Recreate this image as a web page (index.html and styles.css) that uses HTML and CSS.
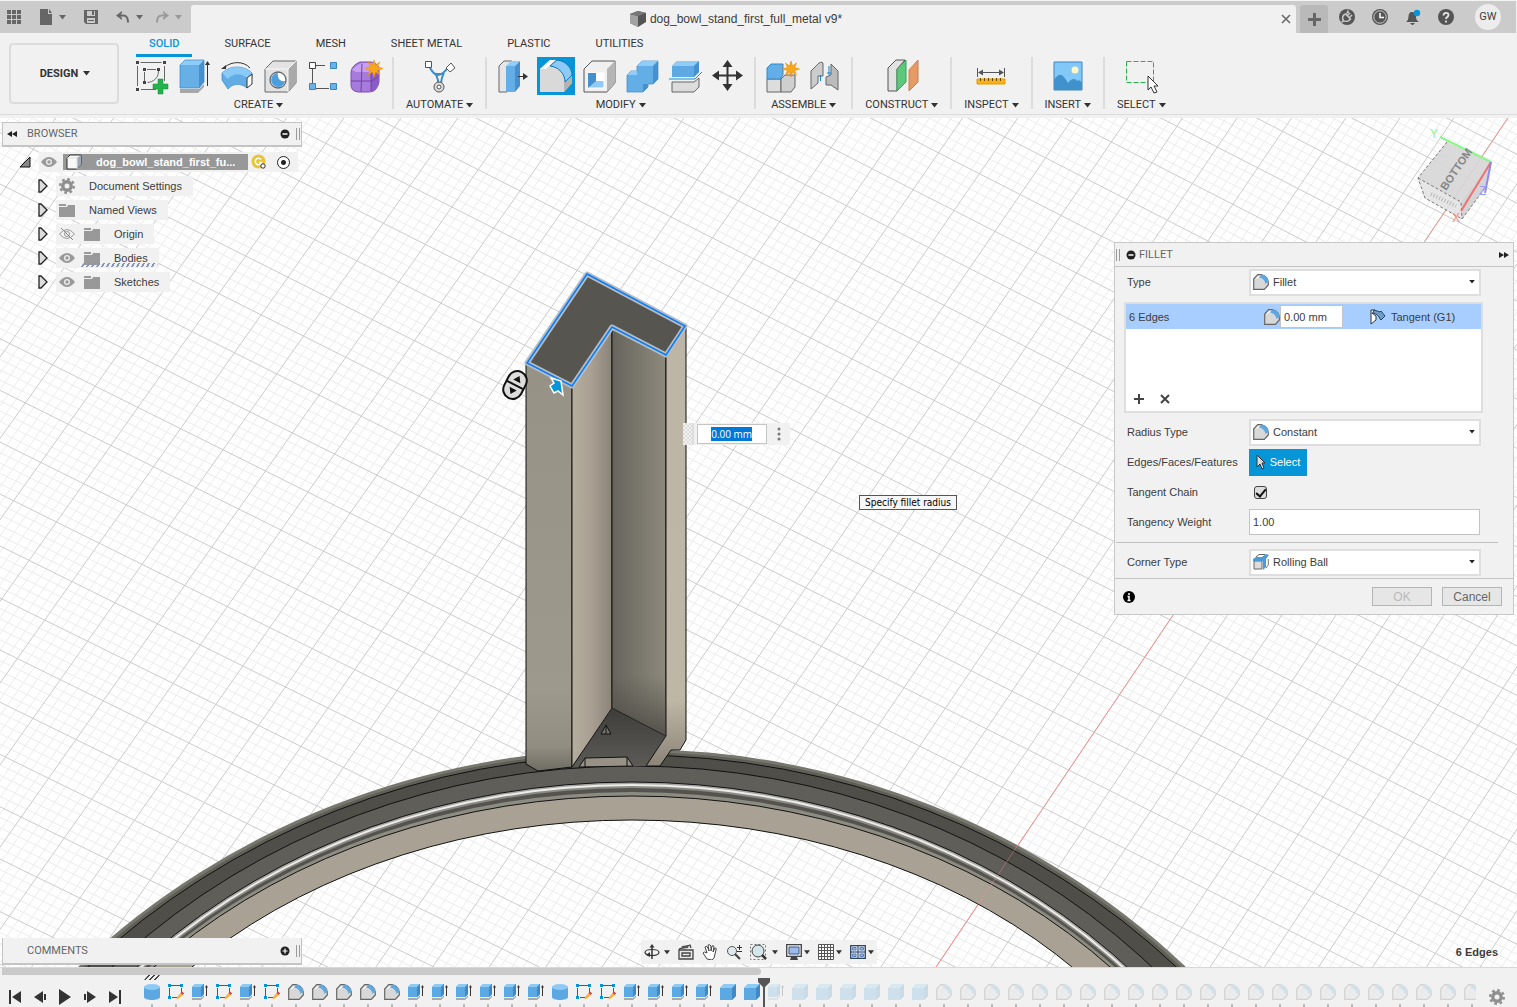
FILE: index.html
```html
<!DOCTYPE html>
<html lang="en">
<head>
<meta charset="utf-8">
<title>dog_bowl_stand_first_full_metal v9*</title>
<link rel="stylesheet" href="styles.css">
</head>
<body>
<svg class="sprite" aria-hidden="true">
  <symbol id="caret" viewBox="0 0 7 5"><path d="M0 0h7L3.500 4.500z" fill="currentColor"/></symbol>
  <symbol id="i-apps" viewBox="0 0 14 14"><path d="M0 0h4v4H0zM5 0h4v4H5zM10 0h4v4h-4zM0 5h4v4H0zM5 5h4v4H5zM10 5h4v4h-4zM0 10h4v4H0zM5 10h4v4H5zM10 10h4v4h-4z" fill="#666"/></symbol>
  <symbol id="i-file" viewBox="0 0 14 16"><path d="M1 0h8v5h4v11H1zM10 0l3 4h-3z" fill="#666"/></symbol>
  <symbol id="i-save" viewBox="0 0 14 14"><path d="M0 0h14v14H2l-2-2zM3 1v5h8V1zM3 8v5h8V8z" fill="#666" fill-rule="evenodd"/><path d="M8 1h2v4H8zM4 10h6v1H4z" fill="#666"/></symbol>
  <symbol id="i-undo" viewBox="0 0 14 12"><path d="M0 4.500L6 0v2L3.500 4.500 6 7v2zM3 3.500h4c4 0 6 3 6 8h-2c0-4-1-6-4-6H3z" fill="currentColor"/></symbol>
  <symbol id="i-cube" viewBox="0 0 16 16"><path d="M0 3l8-3 8 2v9l-8 5-8-4z" fill="#555"/><path d="M0 3l8 2v11l-8-4z" fill="#a3a3a3"/><path d="M0 3l8-3 8 2-8 3z" fill="#777"/></symbol>
  <symbol id="i-ext" viewBox="0 0 16 16"><circle cx="8" cy="8" r="8" fill="#555"/><path d="M4.500 11.500C2.500 9 4 5.500 6.500 5l5 5C9.500 12.500 6.500 13 4.500 11.500zM8.500 6.500L11 4M10.500 8.500L13 6M4.500 11.500L2.500 13.500" stroke="#ccc" stroke-width="1.500" fill="none"/><path d="M9 0l1 4-3 1z" fill="#cbcbcb"/></symbol>
  <symbol id="i-clock" viewBox="0 0 16 16"><circle cx="8" cy="8" r="8" fill="#555"/><circle cx="8" cy="8" r="6.200" fill="none" stroke="#ccc"/><path d="M8 4v4.500h4" stroke="#fff" stroke-width="1.500" fill="none"/></symbol>
  <symbol id="i-bell" viewBox="0 0 16 16"><path d="M1 13c3-2 2-5 3-8 1-2 2-2 3-2s3 0 4 3c0 3 0 5 3 7zM5 14h5l-2 2H7z" fill="#555"/><circle cx="12" cy="4" r="3.200" fill="#0696d7"/></symbol>
  <symbol id="i-help" viewBox="0 0 16 16"><circle cx="8" cy="8" r="8" fill="#555"/><path d="M5.500 6.500C5.500 3 10.500 3 10.500 6c0 2-2.500 2-2.500 4M8 11.500v2" stroke="#e5e5e5" stroke-width="1.800" fill="none"/></symbol>

  <symbol id="i-sketch" viewBox="0 0 38 38"><g fill="none" stroke="#666"><path d="M8.500 5.500h21M5.500 9v20M32.500 9v15M9 32.500h15M12.500 15v10M15 12.500h9M26.500 14c0 7-5 11-11 11.500"/></g><path d="M4 4h3v3H4zM31 4h3v3h-3zM4 31h3v3H4zM11 11h3v3h-3zM25 11h3v3h-3zM11 24h3v3h-3z" fill="#444"/><path d="M26 22h5v5h5v5h-5v5h-5v-5h-5v-5h5z" fill="#23b24b" stroke="#178a38" stroke-width=".5"/></symbol>
  <symbol id="i-extrude" viewBox="0 0 38 38"><path d="M5 32h19l5-5v3l-6 6H5z" fill="#a7a7a7"/><path d="M5 8h19v23H5z" fill="#66b0e6"/><path d="M5 8l5-5h19l-5 5z" fill="#8fcdf8"/><path d="M24 8l5-5v22l-5 6z" fill="#4591cf"/><path d="M5 31V8l5-5h19v22l-5 6z" fill="none" stroke="#3a86c2" stroke-width=".7"/><path d="M32.500 29V6" stroke="#333"/><path d="M30 8l2.500-4L35 8z" fill="#333"/></symbol>
  <symbol id="i-revolve" viewBox="0 0 38 38"><path d="M4 16C12 8 26 8 34 16v4l-5 11c-6-5-14-5-19 1l-6-9z" fill="#62ade5" stroke="#3785c4" stroke-width=".7"/><path d="M4 16C12 8 26 8 34 16l-5 5c-6-5-14-5-19 1z" fill="#8bcaf7"/><path d="M29 21l5-4v10l-5 4z" fill="#fff" stroke="#333"/><path d="M7 10C14 4 26 4 32 11" fill="none" stroke="#333"/><path d="M3 12l5-4v4z" fill="#333"/></symbol>
  <symbol id="i-hole" viewBox="0 0 38 38"><path d="M4 12l8-8h23v22l-8 9H4z" fill="#e2e2e2" stroke="#666"/><path d="M27 12l8-8v22l-8 9z" fill="#aaa"/><path d="M4 12h23v23M27 12l8-8" fill="none" stroke="#f8f8f8"/><circle cx="17" cy="23" r="8" fill="#fff" stroke="#666" stroke-width="1.300"/><path d="M17 16a7 7 0 1 0 7 8c-5 1-8-3-7-8z" fill="#4d9fdb"/></symbol>
  <symbol id="i-pattern" viewBox="0 0 38 38"><path d="M8.500 12v14M12 31.500h13" stroke="#555"/><path d="M5.500 5.500h6v6h-6z" fill="#fff" stroke="#444"/><path d="M12 8.500h13" stroke="#555" stroke-dasharray="9 4"/><path d="M26.500 5.500h6v6h-6zM5.500 26.500h6v6h-6zM26.500 26.500h6v6h-6z" fill="#69b3ea" stroke="#3a86c2"/></symbol>
  <symbol id="i-form" viewBox="0 0 38 38"><path d="M4 15Q5 8 13 5h11q7 1 8 8v12q-2 10-10 10H11q-7-1-7-7z" fill="#a77bdc" stroke="#7b4fb5"/><path d="M24 14l8-5v16q-2 9-8 10z" fill="#8b5bc7"/><path d="M5 13q6-7 12-7h9q4 2 0 6l-4 3H9z" fill="#c7a0f2"/><path d="M15 7l-1 28M4 24h21l7-5M24 13v21" fill="none" stroke="#7242a6"/><path d="M27 3l1.700 5 4.300-3-2.500 4.500 5.500 2-5.500 2 2.500 4.500-4.300-3-1.700 5-1.700-5-4.300 3 2.500-4.500-5.500-2 5.500-2-2.500-4.500 4.300 3z" fill="#faa61a" stroke="#ea8c00" stroke-width=".5"/></symbol>
  <symbol id="i-auto" viewBox="0 0 38 38"><path d="M8 9c3 6 6 9 9 9s7-3 11-9M14 16c3 5 4 8 3 13M23 16c-3 5-3 8-3 13M14 17h9" stroke="#3f8cc9" stroke-width="2" fill="none"/><path d="M4.500 4.500h6v6h-6z" fill="#fff" stroke="#555"/><path d="M30 6l4 5-5 4-4-4z" fill="#fff" stroke="#555"/><circle cx="18" cy="30" r="5" fill="#ddd" stroke="#555"/><circle cx="18" cy="30" r="2" fill="#fff" stroke="#555"/></symbol>
  <symbol id="i-press" viewBox="0 0 38 38"><path d="M5 9l5-5h8v24l-5 7H5z" fill="#e6e6e6" stroke="#666"/><path d="M12 9h9v26h-9z" fill="#63aee6"/><path d="M12 9l5-5h9l-5 5z" fill="#8fcdf8"/><path d="M21 9l5-5v25l-5 6z" fill="#4591cf"/><path d="M24 19.500h6" stroke="#333"/><path d="M29 16l5 3.500-5 3.500z" fill="#333"/></symbol>
  <symbol id="i-fillet" viewBox="0 0 38 38"><path d="M3 12l10-9h5c10 1 17 9 17 18v5l-8 9H3z" fill="#d9d9d9"/><path d="M3 12l10-9h5L9 12z" fill="#fff"/><path d="M27 25l8-7v8l-8 9z" fill="#b3b3b3"/><path d="M13 9l7-6c9 1 15 8 15 15l-7 7c0-8-6-15-15-16z" fill="#8ccbf8" stroke="#1176ba"/></symbol>
  <symbol id="i-shell" viewBox="0 0 38 38"><path d="M4 12l8-8h23v22l-8 9H4z" fill="#f0f0f0" stroke="#555"/><path d="M27 12l8-8v22l-8 9z" fill="#b5b5b5"/><path d="M8 16h16v15H8z" fill="#8fcbf6" stroke="#fff"/><path d="M8 16h8v8l-8 7z" fill="#4390cc"/><path d="M16 16h8v8h-8z" fill="#fff"/></symbol>
  <symbol id="i-combine" viewBox="0 0 38 38"><path d="M4 18l4-4h6V9l5-5h16v18l-5 5h-5v3l-5 5H4z" fill="#63aee6" stroke="#3a86c2" stroke-width=".7"/><path d="M14 9l5-5h16l-5 5z" fill="#8fcdf8"/><path d="M30 9l5-5v18l-5 5zM20 27h5v3l-5 5z" fill="#4591cf"/><path d="M4 18l4-4h6v4z" fill="#8fcdf8"/></symbol>
  <symbol id="i-split" viewBox="0 0 38 38"><path d="M6 9l5-5h22v11l-5 5H6z" fill="#5ea9e2"/><path d="M6 9l5-5h22l-5 5z" fill="#8fcdf8"/><path d="M28 9l5-5v11l-5 5z" fill="#4591cf"/><path d="M6 25h22l5-4v9l-5 5H6z" fill="#dcdcdc" stroke="#666"/><path d="M3 22h26l7-7" stroke="#0696d7" fill="none"/></symbol>
  <symbol id="i-move" viewBox="0 0 38 38"><path d="M18.500 7v23M7 18.500h23" stroke="#333" stroke-width="2"/><path d="M18.500 3l5 7h-10zM18.500 34l5-7h-10zM3 18.500l7-5v10zM34 18.500l-7-5v10z" fill="#333"/></symbol>
  <symbol id="i-newcomp" viewBox="0 0 38 38"><path d="M4 22h14v13H4z" fill="#ddd" stroke="#666"/><path d="M18 22l4-4h10v12l-4 5H18z" fill="#cfcfcf" stroke="#666"/><path d="M4 11l4-4h12v11l-3 4H4z" fill="#63aee6" stroke="#3a86c2"/><path d="M28 4l1.500 5 4-3-2 4.500 5 1.500-5 1.500 2 4.500-4-3-1.500 5-1.500-5-4 3 2-4.500-5-1.500 5-1.500-2-4.500 4 3z" fill="#faa61a" stroke="#ea8c00" stroke-width=".6"/></symbol>
  <symbol id="i-joint" viewBox="0 0 38 38"><path d="M5 14l8-8q4-2 4 1v12h-5v7l-7 6z" fill="#ccc" stroke="#666"/><path d="M32 14l-7-7v11l-5 2v8h5l7 5z" fill="#bbb" stroke="#666"/><path d="M14.500 18v6M23 9v9M21 16h4" stroke="#0a84d8"/></symbol>
  <symbol id="i-plane" viewBox="0 0 38 38"><path d="M5 11l8-8h9l-8 9v22H5z" fill="#e2e2e2" stroke="#555"/><path d="M14 12l9-9v22l-9 9z" fill="#5dc77c" stroke="#38a159"/><path d="M26 13l9-10v22l-9 9z" fill="#e69a66" stroke="#d17f45"/></symbol>
  <symbol id="i-measure" viewBox="0 0 38 38"><path d="M5.500 11v9M32.500 11v9M7 15.500h24" stroke="#555"/><path d="M6 15.500l5-3v6zM32 15.500l-5-3v6z" fill="#555"/><path d="M5 22h28v5H5z" fill="#fbb116" stroke="#e59a00"/><path d="M8.500 21v3M12.500 21v3M16.500 21v3M20.500 21v3M24.500 21v3M28.500 21v3" stroke="#6b4a00"/></symbol>
  <symbol id="i-image" viewBox="0 0 38 38"><path d="M5 5h28v28H5z" fill="#82c8f8" stroke="#3a86c2"/><path d="M5 23c6-9 9-5 14 3 3-5 8-5 9-2 2-2 4 0 5 2v7H5z" fill="#4092cd"/><circle cx="26" cy="13" r="3.500" fill="#fdf8c4"/></symbol>
  <symbol id="i-select" viewBox="0 0 38 38"><path d="M4.500 4.500h27v21h-27z" fill="none" stroke="#23b24b" stroke-dasharray="5 2"/><path d="M26 19v14l3-3 3 6 3-1-3-6h4z" fill="#fff" stroke="#333"/></symbol>

  <symbol id="i-less" viewBox="0 0 12 12"><circle cx="6" cy="6" r="4.500" fill="#222"/><path d="M3.500 6h5" stroke="#fff" stroke-width="1.500"/></symbol>
  <symbol id="i-more" viewBox="0 0 12 12"><circle cx="6" cy="6" r="4.500" fill="#222"/><path d="M3.500 6h5M6 3.500v5" stroke="#fff" stroke-width="1.200"/></symbol>
  <symbol id="i-back" viewBox="0 0 10 6"><path d="M5 0v6L0 3zM10 0v6L5 3z" fill="#222"/></symbol>
  <symbol id="i-fwd" viewBox="0 0 10 6"><path d="M5 0v6l5-3zM0 0v6l5-3z" fill="#222"/></symbol>
  <symbol id="i-open" viewBox="0 0 12 12"><path d="M11 1v10H1z" fill="#888" stroke="#111"/></symbol>
  <symbol id="i-closed" viewBox="0 0 10 14"><path d="M1 1h2l6 6-6 6H1z" fill="#ddd" stroke="#222" stroke-width="1.300"/></symbol>
  <symbol id="i-eye" viewBox="0 0 16 12"><path d="M0 6q8-10 16 0-8 10-16 0z" fill="#999"/><circle cx="8" cy="6" r="3" fill="#eee"/><circle cx="8" cy="6" r="1.700" fill="#999"/></symbol>
  <symbol id="i-noeye" viewBox="0 0 16 12"><path d="M.5 6q7.500-9 15 0-7.500 9-15 0z" fill="none" stroke="#999"/><circle cx="8" cy="6" r="2.500" fill="none" stroke="#999"/><path d="M2 0l12 12" stroke="#888"/></symbol>
  <symbol id="i-folder" viewBox="0 0 16 13"><path d="M0 0h7v2H0zM0 3h8l1-2h7v12H0z" fill="#999"/></symbol>
  <symbol id="i-gear" viewBox="0 0 16 16"><circle cx="8" cy="8" r="4.200" fill="none" stroke="#8f8f8f" stroke-width="3.400"/><circle cx="8" cy="8" r="6.800" fill="none" stroke="#8f8f8f" stroke-width="2.400" stroke-dasharray="2.670 2.670"/></symbol>
  <symbol id="i-body" viewBox="0 0 16 16"><path d="M1 4l3-3h11v10l-4 4H1z" fill="#f8f8f8" stroke="#333"/><path d="M11 4l4-3v10l-4 4z" fill="#9ba7b5"/><path d="M1 4h10v11" fill="none" stroke="#ddd"/></symbol>

  <symbol id="t-fillet" viewBox="0 0 16 16"><path d="M.7 5l4-4.300h4C13 2 15.300 5 15.300 9v2l-4 4.300H.7z" fill="#d8d8d8" stroke="#666" stroke-width="1.200"/><path d="M2 5l3-3h2L5 4.500z" fill="#f4f4f4"/><path d="M6 3.500L8.500.600c4 .5 6.500 4 6.800 7L12.500 10C12 6.500 9.500 4 6 3.500z" fill="#5ca9e2"/></symbol>
  <symbol id="t-ball" viewBox="0 0 16 16"><path d="M1 7h8v8H1z" fill="#ddd" stroke="#666"/><path d="M3 3L6 .5h6" stroke="#666" fill="none"/><path d="M0 5l3-2h6l4-3 3 1-3 4v8l-3 3V7H0z" fill="#4d9ad4"/><path d="M15.300 5v6L13 14" fill="none" stroke="#777"/></symbol>
  <symbol id="t-tan" viewBox="0 0 16 16"><path d="M1 1h4L2 5M1 1v14l5-4V7L2 4" fill="#fff" stroke="#333"/><path d="M4 1l6 2 1-1 4 5-4 4-1-1C9 7 7 5 3 4z" fill="#6f9dc5" stroke="#24466b"/></symbol>
  <symbol id="t-arrow" viewBox="0 0 10 16"><path d="M1 1v12l3-3 2 5 2-1-2-5h3z" fill="#ddd" stroke="#333"/></symbol>
  <symbol id="t-cyl" viewBox="0 0 16 16"><path d="M0 3v10c0 4 16 4 16 0V3z" fill="#5ca8e2"/><ellipse cx="8" cy="3" rx="8" ry="3" fill="#8dcbf7"/></symbol>
  <symbol id="t-sketch" viewBox="0 0 16 16"><path d="M3 1.500h9M13.500 4v5M1.500 4v8M4 13.500h5" fill="none" stroke="#555"/><path d="M0 0h3v3H0zM12 0h3v3h-3zM0 12h3v3H0z" fill="#0696d7"/><path d="M14 7.500l2 2-5 5-2.500 1 1-3z" fill="#f6b13d"/><path d="M14 7.500l2 2-1.500 1.500-2-2z" fill="#e3374a"/></symbol>
  <symbol id="t-extrude" viewBox="0 0 16 16"><path d="M0 14h9l3-3v2l-3 3H0z" fill="#aaa"/><path d="M0 3l3-3h9v10l-3 3H0z" fill="#5ca8e2"/><path d="M0 3l3-3h9L9 3z" fill="#8dcbf7"/><path d="M9 3l3-3v10l-3 3z" fill="#3e8ac8"/><path d="M14.500 12V2" stroke="#333"/><path d="M13 3.500L14.500 1 16 3.500z" fill="#333"/></symbol>
  <symbol id="t-box" viewBox="0 0 16 16"><path d="M0 4l4-4h12v12l-4 4H0z" fill="#5ca8e2"/><path d="M0 4l4-4h12l-4 4z" fill="#8dcbf7"/><path d="M12 4l4-4v12l-4 4z" fill="#3e8ac8"/></symbol>

  <symbol id="p-first" viewBox="0 0 14 14"><path d="M1 0h2v14H1zM13 1v12L4 7z" fill="#333"/></symbol>
  <symbol id="p-prev" viewBox="0 0 14 14"><path d="M10 1v12L1 7zM11 4h2v6h-2z" fill="#333"/></symbol>
  <symbol id="p-play" viewBox="0 0 14 16"><path d="M1 0v16l12-8z" fill="#333"/></symbol>
  <symbol id="p-next" viewBox="0 0 14 14"><path d="M4 1v12l9-6zM1 4h2v6H1z" fill="#333"/></symbol>
  <symbol id="p-last" viewBox="0 0 14 14"><path d="M11 0h2v14h-2zM1 1v12l9-6z" fill="#333"/></symbol>

  <symbol id="n-orbit" viewBox="0 0 16 16"><ellipse cx="8" cy="8.500" rx="7" ry="3" fill="none" stroke="#333" stroke-width="1.200"/><path d="M8 2v13" stroke="#333" stroke-width="1.500"/><path d="M5.500 3.500L8 0l2.500 3.500zM2 11l4-3v5z" fill="#333"/></symbol>
  <symbol id="n-look" viewBox="0 0 16 16"><path d="M1 6h14v9H1zM1 5l11-4 1 3M4 9h8v3H4z" fill="#e8e8e8" stroke="#444" stroke-width="1.300"/><path d="M4 2l7-1-1 3-7 1z" fill="#555"/></symbol>
  <symbol id="n-pan" viewBox="0 0 16 16"><path d="M5 15L1 9q1-2 4 0L3 3q1-2 3 1l1 3-1-6q2-1 3 1v5l1-5q2-1 2 1l-1 5 2-4q2 0 1 2l-2 8-2 2z" fill="#fff" stroke="#444"/></symbol>
  <symbol id="n-zoom" viewBox="0 0 16 16"><circle cx="6" cy="7" r="4.500" fill="#dfe9ee" stroke="#555"/><path d="M9 10l5 5" stroke="#444" stroke-width="2.200"/><path d="M11 3.500h5M13.500 1v5M11 7.500h5" stroke="#333"/></symbol>
  <symbol id="n-fit" viewBox="0 0 18 16"><path d="M.5.500h15v15H.5z" fill="none" stroke="#777" stroke-dasharray="2 2"/><circle cx="8" cy="7" r="6" fill="#d3e6ea" stroke="#444"/><path d="M12 11l4 4" stroke="#333" stroke-width="2.500"/></symbol>
  <symbol id="n-display" viewBox="0 0 16 16"><path d="M.7.700h14.600v11.600H.7z" fill="#eee" stroke="#444" stroke-width="1.300"/><path d="M3 3h10v7H3z" fill="#9dbbe6" stroke="#3b5b8e"/><path d="M5 13h6l1 3H4z" fill="#444"/></symbol>
  <symbol id="n-grid" viewBox="0 0 16 16"><path d="M.5.500h15v15H.5zM3.500 0v16M6.500 0v16M9.500 0v16M12.500 0v16M0 3.500h16M0 6.500h16M0 9.500h16M0 12.500h16" fill="#fff" stroke="#555"/></symbol>
  <symbol id="n-views" viewBox="0 0 16 14"><path d="M.7.700h14.600v12.600H.7z" fill="#dde6f2" stroke="#2f4568" stroke-width="1.300"/><path d="M2.500 2.500h3.500v2.500H2.500zM10 2.500h3.500v2.500H10zM2.500 9h3.500v2.500H2.500zM10 9h3.500v2.500H10z" fill="#9ab8e0" stroke="#5d7fae"/><path d="M8 0v14M0 7h16" stroke="#2f4568"/></symbol>
</svg>

<header class="titlebar">
  <div class="quick">
    <button class="ico" aria-label="Data panel"><svg width="14" height="14"><use href="#i-apps"/></svg></button>
    <button class="ico" aria-label="File"><svg width="14" height="16"><use href="#i-file"/></svg><svg width="7" height="5"><use href="#caret"/></svg></button>
    <button class="ico" aria-label="Save"><svg width="14" height="14"><use href="#i-save"/></svg></button>
    <button class="ico" aria-label="Undo"><svg width="14" height="12"><use href="#i-undo"/></svg><svg width="7" height="5"><use href="#caret"/></svg></button>
    <button class="ico dim" aria-label="Redo"><svg class="flip" width="14" height="12"><use href="#i-undo"/></svg><svg width="7" height="5"><use href="#caret"/></svg></button>
  </div>
  <div class="doc-tab">
    <span class="doc-title"><svg width="16" height="16"><use href="#i-cube"/></svg>dog_bowl_stand_first_full_metal v9*</span>
    <button class="ico" aria-label="Close"><svg width="10" height="10"><path d="M1 1l8 8M9 1L1 9" stroke="#666" stroke-width="1.500"/></svg></button>
  </div>
  <div class="account">
    <button class="new-tab" aria-label="New tab"><svg width="13" height="13"><path d="M6.500 0v13M0 6.500h13" stroke="#666" stroke-width="3"/></svg></button>
    <button class="ico" aria-label="Extensions"><svg width="16" height="16"><use href="#i-ext"/></svg></button>
    <button class="ico" aria-label="Job status"><svg width="16" height="16"><use href="#i-clock"/></svg></button>
    <button class="ico" aria-label="Notifications"><svg width="16" height="16"><use href="#i-bell"/></svg></button>
    <button class="ico" aria-label="Help"><svg width="16" height="16"><use href="#i-help"/></svg></button>
    <button class="avatar">GW</button>
  </div>
</header>

<div class="ribbon">
  <button class="workspace">DESIGN <svg width="7" height="5"><use href="#caret"/></svg></button>
  <div class="tools">
    <nav class="tabs">
      <a href="#" class="active">SOLID</a><a href="#">SURFACE</a><a href="#">MESH</a><a href="#">SHEET METAL</a><a href="#">PLASTIC</a><a href="#">UTILITIES</a>
    </nav>
    <div class="groups">
      <section class="group">
        <div class="icons">
          <button aria-label="Create sketch"><svg><use href="#i-sketch"/></svg></button>
          <button aria-label="Extrude"><svg><use href="#i-extrude"/></svg></button>
          <button aria-label="Revolve"><svg><use href="#i-revolve"/></svg></button>
          <button aria-label="Hole"><svg><use href="#i-hole"/></svg></button>
          <button aria-label="Pattern"><svg><use href="#i-pattern"/></svg></button>
          <button aria-label="Create form"><svg><use href="#i-form"/></svg></button>
        </div>
        <button class="menu">CREATE <svg width="7" height="5"><use href="#caret"/></svg></button>
      </section>
      <section class="group">
        <div class="icons"><button aria-label="Automate"><svg><use href="#i-auto"/></svg></button></div>
        <button class="menu">AUTOMATE <svg width="7" height="5"><use href="#caret"/></svg></button>
      </section>
      <section class="group">
        <div class="icons">
          <button aria-label="Press pull"><svg><use href="#i-press"/></svg></button>
          <button class="on" aria-label="Fillet"><svg><use href="#i-fillet"/></svg></button>
          <button aria-label="Shell"><svg><use href="#i-shell"/></svg></button>
          <button aria-label="Combine"><svg><use href="#i-combine"/></svg></button>
          <button aria-label="Split"><svg><use href="#i-split"/></svg></button>
          <button aria-label="Move"><svg><use href="#i-move"/></svg></button>
        </div>
        <button class="menu">MODIFY <svg width="7" height="5"><use href="#caret"/></svg></button>
      </section>
      <section class="group">
        <div class="icons">
          <button aria-label="New component"><svg><use href="#i-newcomp"/></svg></button>
          <button aria-label="Joint"><svg><use href="#i-joint"/></svg></button>
        </div>
        <button class="menu">ASSEMBLE <svg width="7" height="5"><use href="#caret"/></svg></button>
      </section>
      <section class="group">
        <div class="icons"><button aria-label="Offset plane"><svg><use href="#i-plane"/></svg></button></div>
        <button class="menu">CONSTRUCT <svg width="7" height="5"><use href="#caret"/></svg></button>
      </section>
      <section class="group">
        <div class="icons"><button aria-label="Measure"><svg><use href="#i-measure"/></svg></button></div>
        <button class="menu">INSPECT <svg width="7" height="5"><use href="#caret"/></svg></button>
      </section>
      <section class="group">
        <div class="icons"><button aria-label="Insert image"><svg><use href="#i-image"/></svg></button></div>
        <button class="menu">INSERT <svg width="7" height="5"><use href="#caret"/></svg></button>
      </section>
      <section class="group">
        <div class="icons"><button aria-label="Select"><svg><use href="#i-select"/></svg></button></div>
        <button class="menu">SELECT <svg width="7" height="5"><use href="#caret"/></svg></button>
      </section>
    </div>
  </div>
</div>

<main class="viewport">
  <svg class="scene" viewBox="0 118 1517 849" preserveAspectRatio="xMidYMid slice">
    <defs>
      <linearGradient id="left" x1="0" y1="0" x2="0" y2="1"><stop offset="0" stop-color="#969286"/><stop offset=".8" stop-color="#9d998c"/><stop offset=".94" stop-color="#918d81"/><stop offset="1" stop-color="#6f6c63"/></linearGradient>
      <linearGradient id="inner" x1="0" x2="1"><stop offset="0" stop-color="#b5ad9e"/><stop offset=".5" stop-color="#a89f92"/><stop offset="1" stop-color="#8a8378"/></linearGradient>
      <linearGradient id="innerdark" x1="0" x2="1"><stop offset="0" stop-color="#67645d"/><stop offset=".4" stop-color="#76736a"/><stop offset="1" stop-color="#8d897c"/></linearGradient>
      <linearGradient id="fade" x1="0" y1="0" x2="0" y2="1"><stop offset="0" stop-color="#47453f" stop-opacity="0"/><stop offset=".85" stop-color="#47453f" stop-opacity="0"/><stop offset="1" stop-color="#3c3a36" stop-opacity=".7"/></linearGradient>
      <linearGradient id="right" x1="0" y1="0" x2="0" y2="1"><stop offset="0" stop-color="#bdb6a6"/><stop offset=".85" stop-color="#beb7a6"/><stop offset="1" stop-color="#8c8578"/></linearGradient>
      <linearGradient id="floor" x1="0" y1="0" x2="0" y2="1"><stop offset="0" stop-color="#3e3d3a"/><stop offset="1" stop-color="#5c5b56"/></linearGradient>
      <mask id="hole" maskUnits="userSpaceOnUse" x="0" y="118" width="1517" height="849"><rect x="0" y="118" width="1517" height="849" fill="#fff"/><ellipse cx="632" cy="1279" rx="600" ry="459" fill="#000"/></mask>
    </defs>
    <g id="grid"></g>
    <path d="M1508 118L936 967" class="axis"/>
    <g mask="url(#hole)">
      <ellipse cx="632" cy="1486" rx="780" ry="737" fill="#77776e"/>
      <ellipse cx="632" cy="1487" rx="777" ry="735" fill="#5f5f58"/>
      <ellipse cx="632" cy="1488" rx="774" ry="733" fill="#4f4e49" class="edge"/>
      <ellipse cx="632" cy="1418" rx="720" ry="652" fill="#5f5e59" class="edge"/>
      <ellipse cx="632" cy="1370" rx="680" ry="588" fill="#a5a49e" class="edge"/>
      <ellipse cx="632" cy="1370" rx="678" ry="586" fill="#ececea"/>
      <ellipse cx="632" cy="1362" rx="672" ry="576" fill="#8b8a84"/>
      <ellipse cx="632" cy="1358" rx="669" ry="570" fill="#54534e"/>
      <ellipse cx="632" cy="1342" rx="660" ry="550" fill="#8d8c83"/>
      <ellipse cx="632" cy="1326" rx="650" ry="530" fill="#a9a294" class="edge"/>
    </g>
    <ellipse cx="632" cy="1279" rx="600" ry="459" fill="none" class="edge"/>
    <path d="M1028 830L936 967" class="axis faint"/>
    <path d="M572 767L612 708 666 736 646 766z" fill="url(#floor)"/>
    <g class="edge">
      <path d="M526 363L572 387V767L538 771 526 764z" fill="url(#left)"/>
      <path d="M572 387L612 327V708L572 767z" fill="url(#inner)"/>
      <path d="M612 327L666 356V736L612 708z" fill="url(#innerdark)"/>
      <path d="M666 356L686 326V740l-6 10h-9l-11 16h-14l20-30z" fill="url(#right)"/>
      <path d="M612 327L666 356V736L612 708z" fill="url(#fade)" stroke="none"/>
      <path d="M579 767l6-9 42-1 6 9z" fill="#979285"/>
      <path d="M585 758v9M627 757v9M606 725l-5 9h10zM606 725v9" fill="#77736a"/>
    </g>
    <path d="M587 274L685 326 666 355 612 327 572 386 527 363z" fill="#575550" stroke="#b4bcc6" stroke-width="5" stroke-linejoin="round"/>
    <path d="M587 274L685 326 666 355 612 327 572 386 527 363z" fill="none" stroke="#0a7cf5" stroke-width="1.500"/>
    <g transform="translate(515 385) rotate(27)">
      <rect x="-9.500" y="-14.500" width="19" height="29" rx="9.500" fill="#ddd" stroke="#111" stroke-width="2"/>
      <path d="M-9 0H9" stroke="#111" stroke-width="2"/><path d="M0-10l4 6h-8zM0 10l4-6h-8z" fill="#111"/>
    </g>
    <path d="M551 378l10 3 2 14-5-4-4 2-4-7 4-3z" fill="#0696d7" stroke="#fff" stroke-width="1.500"/>
    <g class="viewcube">
      <path d="M1447 142l44 20-30 40-43-24z" fill="#d6d6d6" fill-opacity=".9"/>
      <path d="M1418 178l43 24 1 17-37-21z" fill="#e3e3e3" fill-opacity=".9"/>
      <path d="M1491 162l-30 40 1 17 23-31z" fill="#cfcfcf" fill-opacity=".9"/>
      <path d="M1447 142l-29 36 7 20 37 21 23-31M1418 178l43 24 1 17" fill="none" stroke="#777" stroke-dasharray="3 2"/>
      <path d="M1431 194l25 12" stroke="#9a9a9a" stroke-width="4" stroke-dasharray="1 2" opacity=".6"/>
      <path d="M1440 137l51 25" stroke="#8df58d" stroke-width="2"/>
      <path d="M1491 162l-30 49" stroke="#f07070" stroke-width="2"/>
      <path d="M1491 162l-6 31" stroke="#8a8af5" stroke-width="2"/>
      <text transform="translate(1446 191) rotate(-56)" class="face">BOTTOM</text>
      <text x="1430" y="138" fill="#8df58d">Y</text><text x="1452" y="222" fill="#f58a8a">X</text><text x="1479" y="195" fill="#9a9af8">Z</text>
    </g>
  </svg>

  <div class="left-col">
    <aside>
      <div class="bar">
        <button class="ico" aria-label="Collapse"><svg width="10" height="6"><use href="#i-back"/></svg></button>
        <h2>BROWSER</h2>
        <button class="ico" aria-label="Minimize"><svg width="12" height="12"><use href="#i-less"/></svg></button><i class="grip"></i>
      </div>
      <ul class="tree">
        <li class="root"><svg class="tw" width="12" height="12"><use href="#i-open"/></svg><div class="chip"><svg width="16" height="12"><use href="#i-eye"/></svg><span class="name"><svg width="16" height="16"><use href="#i-body"/></svg>dog_bowl_stand_first_fu...</span><svg width="16" height="16"><circle cx="7.500" cy="7.500" r="7" fill="#e6c536"/><path d="M10 5.500a3.200 3.200 0 1 0 .5 3H8" fill="none" stroke="#fff" stroke-width="1.500"/><circle cx="12" cy="12" r="2.200" fill="#fff" stroke="#333"/></svg><input type="radio" checked aria-label="Activate component"></div></li>
        <li><svg class="tw" width="10" height="14"><use href="#i-closed"/></svg><div class="chip"><svg width="16" height="16"><use href="#i-gear"/></svg><span>Document Settings</span></div></li>
        <li><svg class="tw" width="10" height="14"><use href="#i-closed"/></svg><div class="chip"><svg width="16" height="13"><use href="#i-folder"/></svg><span>Named Views</span></div></li>
        <li><svg class="tw" width="10" height="14"><use href="#i-closed"/></svg><div class="chip"><svg width="16" height="12"><use href="#i-noeye"/></svg><svg class="fold" width="16" height="13"><use href="#i-folder"/></svg><span>Origin</span></div></li>
        <li><svg class="tw" width="10" height="14"><use href="#i-closed"/></svg><div class="chip hatch"><svg width="16" height="12"><use href="#i-eye"/></svg><svg class="fold" width="16" height="13"><use href="#i-folder"/></svg><span>Bodies</span></div></li>
        <li><svg class="tw" width="10" height="14"><use href="#i-closed"/></svg><div class="chip"><svg width="16" height="12"><use href="#i-eye"/></svg><svg class="fold" width="16" height="13"><use href="#i-folder"/></svg><span>Sketches</span></div></li>
      </ul>
    </aside>
    <div class="bar comments">
      <h2>COMMENTS</h2>
      <button class="ico" aria-label="Expand"><svg width="12" height="12"><use href="#i-more"/></svg></button><i class="grip"></i>
    </div>
  </div>

  <div class="value-box"><i class="dots"></i><input type="text" value="0.00 mm" aria-label="Fillet radius"><svg width="4" height="14"><circle cx="2" cy="2" r="1.500" fill="#777"/><circle cx="2" cy="7" r="1.500" fill="#777"/><circle cx="2" cy="12" r="1.500" fill="#777"/></svg></div>
  <div class="tip" role="tooltip">Specify fillet radius</div>

  <form class="dialog">
    <div class="dialog-head"><i class="grip"></i><svg width="12" height="12"><use href="#i-less"/></svg><h2>FILLET</h2><button type="button" class="ico" aria-label="Dock"><svg width="10" height="6"><use href="#i-fwd"/></svg></button></div>
    <div class="rows">
      <div class="row"><label for="type">Type</label><div class="drop"><svg width="16" height="16"><use href="#t-fillet"/></svg><select id="type"><option>Fillet</option></select><svg width="6" height="4"><use href="#caret"/></svg></div></div>
      <div class="list">
        <div class="sel"><span class="what">6 Edges</span><svg width="16" height="16"><use href="#t-fillet"/></svg><input type="text" value="0.00 mm" aria-label="Radius"><svg class="tan" width="16" height="16"><use href="#t-tan"/></svg><span>Tangent (G1)</span></div>
        <div class="list-tools"><button type="button" aria-label="Add"><svg width="12" height="12"><path d="M6 1v10M1 6h10" stroke="#444" stroke-width="2"/></svg></button><button type="button" aria-label="Remove"><svg width="12" height="12"><path d="M2 2l8 8M10 2l-8 8" stroke="#444" stroke-width="2"/></svg></button></div>
      </div>
      <div class="row"><label for="rt">Radius Type</label><div class="drop"><svg width="16" height="16"><use href="#t-fillet"/></svg><select id="rt"><option>Constant</option></select><svg width="6" height="4"><use href="#caret"/></svg></div></div>
      <div class="row"><span>Edges/Faces/Features</span><button type="button" class="pick"><svg width="10" height="16"><use href="#t-arrow"/></svg>Select</button></div>
      <div class="row"><label for="tc">Tangent Chain</label><input type="checkbox" id="tc" checked></div>
      <div class="row"><label for="tw">Tangency Weight</label><input type="text" id="tw" class="field" value="1.00"></div>
      <hr>
      <div class="row"><label for="ct">Corner Type</label><div class="drop"><svg width="16" height="16"><use href="#t-ball"/></svg><select id="ct"><option>Rolling Ball</option></select><svg width="6" height="4"><use href="#caret"/></svg></div></div>
    </div>
    <div class="dialog-foot"><svg width="12" height="12"><circle cx="6" cy="6" r="6" fill="#000"/><path d="M6 2v2M4.500 5.500H6V9M4.500 9.500h3" stroke="#fff" stroke-width="1.500" fill="none"/></svg><button type="button" disabled>OK</button><button type="button">Cancel</button></div>
  </form>

  <div class="navbar">
    <button class="wide" aria-label="Orbit"><svg width="16" height="16"><use href="#n-orbit"/></svg><svg width="6" height="5"><use href="#caret"/></svg></button>
    <button aria-label="Look at"><svg width="16" height="16"><use href="#n-look"/></svg></button>
    <button aria-label="Pan"><svg width="16" height="16"><use href="#n-pan"/></svg></button>
    <button aria-label="Zoom"><svg width="16" height="16"><use href="#n-zoom"/></svg></button>
    <button class="wide" aria-label="Fit"><svg width="18" height="16"><use href="#n-fit"/></svg><svg width="6" height="5"><use href="#caret"/></svg></button>
    <button aria-label="Display settings"><svg width="16" height="16"><use href="#n-display"/></svg><svg width="6" height="5"><use href="#caret"/></svg></button>
    <button aria-label="Grid and snaps"><svg width="16" height="16"><use href="#n-grid"/></svg><svg width="6" height="5"><use href="#caret"/></svg></button>
    <button aria-label="Viewports"><svg width="16" height="14"><use href="#n-views"/></svg><svg width="6" height="5"><use href="#caret"/></svg></button>
  </div>
  <output class="count">6 Edges</output>
</main>

<footer class="timeline">
  <div class="scroll"></div>
  <div class="play">
    <button aria-label="First"><svg width="14" height="14"><use href="#p-first"/></svg></button>
    <button aria-label="Previous"><svg width="14" height="14"><use href="#p-prev"/></svg></button>
    <button aria-label="Play"><svg width="14" height="16"><use href="#p-play"/></svg></button>
    <button aria-label="Next"><svg width="14" height="14"><use href="#p-next"/></svg></button>
    <button aria-label="Last"><svg width="14" height="14"><use href="#p-last"/></svg></button>
  </div>
  <ol class="features" id="features"></ol>
  <button class="ico settings" aria-label="Timeline settings"><svg width="16" height="16"><use href="#i-gear"/></svg></button>
</footer>
<script src="app.js"></script>
</body>
</html>
```

FILE: styles.css
```css
* { box-sizing: border-box; }
body { margin: 0; height: 100vh; display: flex; flex-direction: column; overflow: hidden; background: #f1f1f1; font: 11px/14px "Liberation Sans", Arial, sans-serif; color: #3c3c3c; }
button, input, select { font: inherit; color: inherit; }
button { border: 0; padding: 0; background: none; display: flex; align-items: center; justify-content: center; }
svg { display: block; flex: none; }
h2 { margin: 0; font: 11px/14px Roboto, sans-serif; color: #666; }
.sprite { position: absolute; width: 0; height: 0; }

.titlebar { height: 33px; flex: none; display: flex; align-items: stretch; background: #cbcbcb; border-top: 1px solid #f4f4f4; border-right: 1px solid #f1f1f1; }
.quick { width: 191px; display: flex; align-items: center; padding-left: 7px; }
.quick .ico { margin-right: 18px; color: #666; gap: 6px; }
.quick .dim { color: #999; margin: 0; }
.quick .ico:nth-child(4) { margin-right: 12px; }
.flip { transform: scaleX(-1); }
.doc-tab { flex: 1; margin-top: 4px; background: #f1f1f1; border-radius: 3px 3px 0 0; display: flex; align-items: center; padding-right: 5px; }
.doc-title { flex: 1; display: flex; align-items: center; justify-content: center; gap: 4px; font-size: 12px; }
.account { display: flex; align-items: center; padding: 0 15px 0 4px; gap: 17px; }
.new-tab { width: 28px; align-self: stretch; margin: 4px -6px 0 0; background: #b9b9b9; border-radius: 3px 3px 0 0; }
.avatar { width: 26px; height: 26px; border-radius: 50%; background: #ececec; font-family: Roboto, sans-serif; margin-left: 4px; }

.ribbon { height: 85px; flex: none; display: flex; background: linear-gradient(#dcdcdc, #dcdcdc) 0 81px / 100% 1px no-repeat #f1f1f1; font-family: Roboto, sans-serif; color: #333; }
.workspace { width: 110px; height: 61px; margin: 10px 4px 0 9px; padding-left: 2px; border: 2px solid #dcdcdc; border-radius: 4px; font-weight: 700; gap: 5px; }
.tools { flex: 1; display: flex; flex-direction: column; }
.tabs { height: 24px; display: flex; gap: 19px; padding-left: 13px; }
.tabs a { padding: 4px 13px 3px; color: #333; text-decoration: none; border-bottom: 3px solid transparent; }
.tabs .active { color: #0696d7; font-weight: 500; border-color: #0696d7; }
.groups { display: flex; height: 54px; padding-left: 2px; }
.group { display: flex; flex-direction: column; align-items: center; border-right: 2px solid #dcdcdc; height: 52px; }
.group:last-child { border: 0; }
.icons { display: flex; gap: 5px; padding: 0 7px; }
.icons button, .icons svg { width: 38px; height: 38px; }
.icons .on { background: #0696d7; }
.menu { gap: 3px; padding: 0 12px; margin-top: 3px; }

.viewport { flex: 1; min-height: 0; position: relative; background: #fff; overflow: hidden; }
.scene { position: absolute; width: 100%; height: 100%; }
.major { stroke: #cbcbcb; fill: none; }
.minor { stroke: #ececec; fill: none; }
.axis { stroke: #f78f8f; }
.faint { opacity: .4; }
.edge { stroke: #111; stroke-width: 1; }
.viewcube text { font: 12px "Liberation Sans", sans-serif; }
.viewcube .face { font: bold 11px "Liberation Sans", sans-serif; fill: #858585; }

.left-col { position: absolute; left: 2px; top: 4px; bottom: 2px; width: 300px; display: flex; flex-direction: column; justify-content: space-between; }
.bar { height: 25px; display: flex; align-items: center; background: #f1f1f1; border: 1px solid #c4c4c4; border-bottom-width: 2px; padding: 0 1px 0 4px; }
.bar h2 { flex: 1; padding-left: 10px; }
.comments { border-top: 0; height: 27px; padding-left: 14px; }
.grip { width: 4px; height: 12px; border: solid #999; border-width: 0 1px; margin-left: 5px; }
.tree { list-style: none; margin: 3px 0 0; padding: 0; }
.tree li { height: 24px; display: flex; align-items: center; padding-left: 36px; }
.tree .root { padding-left: 17px; }
.tw { margin-right: 8px; }
.chip { height: 20px; display: flex; align-items: center; background: #f1f1f1; padding: 0 11px 0 3px; }
.chip span { padding-left: 14px; }
.chip .fold { margin-left: 9px; }
.root .chip { padding: 0 8px 0 2px; }
.root .name { display: flex; align-items: center; gap: 14px; width: 185px; height: 16px; padding-left: 3px; margin: 0 3px 0 6px; background: #989898; color: #fff; font-weight: 700; }
.root input { appearance: none; width: 13px; height: 13px; margin: 0 0 0 10px; border: 1px solid #222; border-radius: 50%; background: radial-gradient(circle, #222 2px, #fff 3px); }
.hatch { position: relative; }
.hatch::after { content: ""; position: absolute; left: 26px; bottom: 1px; width: 75px; height: 4px; transform: skewX(-40deg); background: repeating-linear-gradient(90deg, #8594b5 0 2px, transparent 2px 5px); }

.value-box { position: absolute; left: 45%; top: 305px; height: 22px; display: flex; align-items: center; background: #f1f1f1; padding-right: 9px; }
.value-box input { width: 70px; height: 20px; border: 1px solid #c4c4c4; outline: 0; padding: 0; margin: 0 10px 0 3px; text-align: center; background: #fff; font: 10px/14px "Open Sans", sans-serif; }
.value-box input::selection { background: #0078d7; color: #fff; }
.dots { width: 11px; height: 22px; border-right: 2px solid #ddd; background: repeating-conic-gradient(#ddd 0 25%, #f1f1f1 0 50%) 0 0 / 4px 4px; }
.tip { position: absolute; left: 859px; top: 377px; padding: 0 5px; border: 1px solid #555; background: #f7f7f7; color: #000; font: 10px/13px "DejaVu Sans Condensed", sans-serif; white-space: nowrap; }

.dialog { position: absolute; right: 3px; top: 124px; width: 400px; background: #f1f1f1; border: 1px solid #c8c8c8; }
.dialog-head { height: 24px; display: flex; align-items: center; border-bottom: 1px solid #c4c4c4; padding-right: 4px; }
.dialog-head .grip { margin: 0 5px 0 1px; }
.dialog-head h2 { flex: 1; padding-left: 2px; }
.rows { padding-right: 31px; }
.row { height: 30px; display: grid; grid-template-columns: 122px 232px; align-items: center; padding-left: 12px; }
.drop { height: 27px; display: flex; align-items: center; border: 2px solid #dedede; background: #fff; padding: 0 4px 0 2px; color: #222; }
select { flex: 1; appearance: none; border: 0; background: none; padding: 0 0 0 4px; color: #3c3c3c; }
.list { margin: 5px 0 4px 9px; height: 111px; width: 359px; border: 2px solid #dedede; background: #fff; display: flex; flex-direction: column; justify-content: space-between; }
.sel { height: 25px; display: flex; align-items: center; background: #a8ceff; padding-left: 3px; }
.sel .what { width: 135px; }
.sel input { width: 63px; height: 23px; border: 1px solid #c4c4c4; padding: 0 3px; background: #fff; }
.sel .tan { margin: 0 5px 0 27px; }
.list-tools { display: flex; gap: 14px; padding: 0 0 6px 7px; }
.pick { width: 58px; height: 27px; background: #0696d7; color: #fff; gap: 4px; }
input[type="checkbox"] { appearance: none; width: 13px; height: 13px; margin: 0 0 0 5px; border: 1px solid #444; border-radius: 3px; background: #ddd; display: grid; place-items: center; }
input[type="checkbox"]:checked::after { content: ""; width: 4px; height: 8px; border: solid #111; border-width: 0 2px 2px 0; transform: rotate(40deg); }
.field { height: 26px; width: 231px; border: 1px solid #c4c4c4; background: #fff; padding: 0 3px; }
hr { border: 0; border-top: 1px solid #c0c0c0; margin: 5px -16px 4px 1px; }
.dialog-foot { height: 36px; margin-top: 1px; border-top: 1px solid #c4c4c4; display: flex; align-items: center; gap: 10px; padding: 0 11px 0 8px; }
.dialog-foot svg { margin-right: auto; }
.dialog-foot button { width: 60px; height: 19px; border: 1px solid #b5b5b5; background: #e6e6e6; font-size: 12px; color: #666; }
.dialog-foot button:disabled { color: #b9b9b9; }

.navbar { position: absolute; left: 50%; bottom: 3px; transform: translateX(-50%); display: flex; align-items: center; gap: 8px; height: 24px; padding: 0 3px; background: #f1f1f1; }
.navbar button { gap: 2px; color: #333; }
.navbar .wide { gap: 4px; }
.count { position: absolute; right: 19px; bottom: 8px; font-weight: 700; }

.timeline { height: 40px; flex: none; display: flex; border-top: 1px solid #d8d8d8; position: relative; background: #f1f1f1; }
.scroll { position: absolute; left: 2px; top: 0; width: 50%; height: 7px; margin-right: 50%; border-radius: 0 4px 4px 0; background: #c9c9c9; }
.play { display: flex; gap: 11px; padding: 19px 22px 0 8px; align-items: center; }
.features { list-style: none; margin: 0; padding: 8px 0 0; flex: 1; min-width: 0; overflow: hidden; display: flex; }
.features li { flex: none; width: 24px; height: 32px; padding-top: 8px; position: relative; background: linear-gradient(#bbb, #bbb) 7px 100% / 2px 4px no-repeat; }
.features .off svg { opacity: .22; }
.features .marker { width: 0; padding: 0; background: none; z-index: 1; }
.features .marker svg { position: absolute; right: -2px; top: 2px; }
.features .first::before { content: ""; position: absolute; left: 2px; top: -1px; width: 12px; height: 5px; transform: skewX(-40deg); background: repeating-linear-gradient(90deg, #444 0 2px, transparent 2px 5px); }
.settings { width: 41px; padding-top: 18px; }
```

FILE: app.js
```javascript
const NS = "http://www.w3.org/2000/svg";

// Ground plane seen in weak perspective: plane units (u, v) to screen coordinates.
const cam = { a: 40, b: -24.5, d: 20.6, e: 36.4, g: 0.0008, h: -0.0012 };
const origin = [1443, 214];
function project(u, v) {
  const w = 1 + cam.g * u + cam.h * v;
  return [origin[0] + (cam.a * u + cam.b * v) / w, origin[1] + (cam.d * u + cam.e * v) / w];
}
function gridPath(keep) {
  let d = "";
  for (let i = -200; i <= 200; i++) {
    if (!keep(i)) continue;
    const k = i / 5;
    for (const [p, q] of [[project(k, -40), project(k, 40)], [project(-40, k), project(40, k)]]) {
      d += `M${p[0].toFixed(1)} ${p[1].toFixed(1)}L${q[0].toFixed(1)} ${q[1].toFixed(1)}`;
    }
  }
  return d;
}
for (const [name, keep] of [["minor", i => i % 5 !== 0], ["major", i => i % 5 === 0]]) {
  const path = document.createElementNS(NS, "path");
  path.setAttribute("class", name);
  path.setAttribute("d", gridPath(keep));
  document.getElementById("grid").append(path);
}

// Timeline features; everything after the marker is rolled back.
const runs = [["cyl", 1], ["sketch", 1], ["extrude", 1], ["sketch", 1], ["extrude", 1], ["sketch", 1], ["fillet", 5], ["extrude", 6], ["cyl", 1], ["sketch", 2], ["extrude", 4], ["box", 2], ["marker", 1], ["extrude", 1], ["box", 6], ["fillet", 24]];
const list = document.getElementById("features");
let off = false;
for (const [kind, count] of runs) {
  for (let i = 0; i < count; i++) {
    const li = document.createElement("li");
    if (kind === "marker") {
      off = true;
      li.className = "marker";
      li.innerHTML = '<svg width="12" height="30"><path d="M0 0h12v4L7 9v21H5V9L0 4z" fill="#555"/></svg>';
    } else {
      if (off) li.className = "off";
      li.innerHTML = `<svg width="16" height="16"><use href="#t-${kind}"/></svg>`;
    }
    list.append(li);
  }
}
list.firstChild.classList.add("first");

const radius = document.querySelector(".value-box input");
radius.focus();
radius.select();
```
